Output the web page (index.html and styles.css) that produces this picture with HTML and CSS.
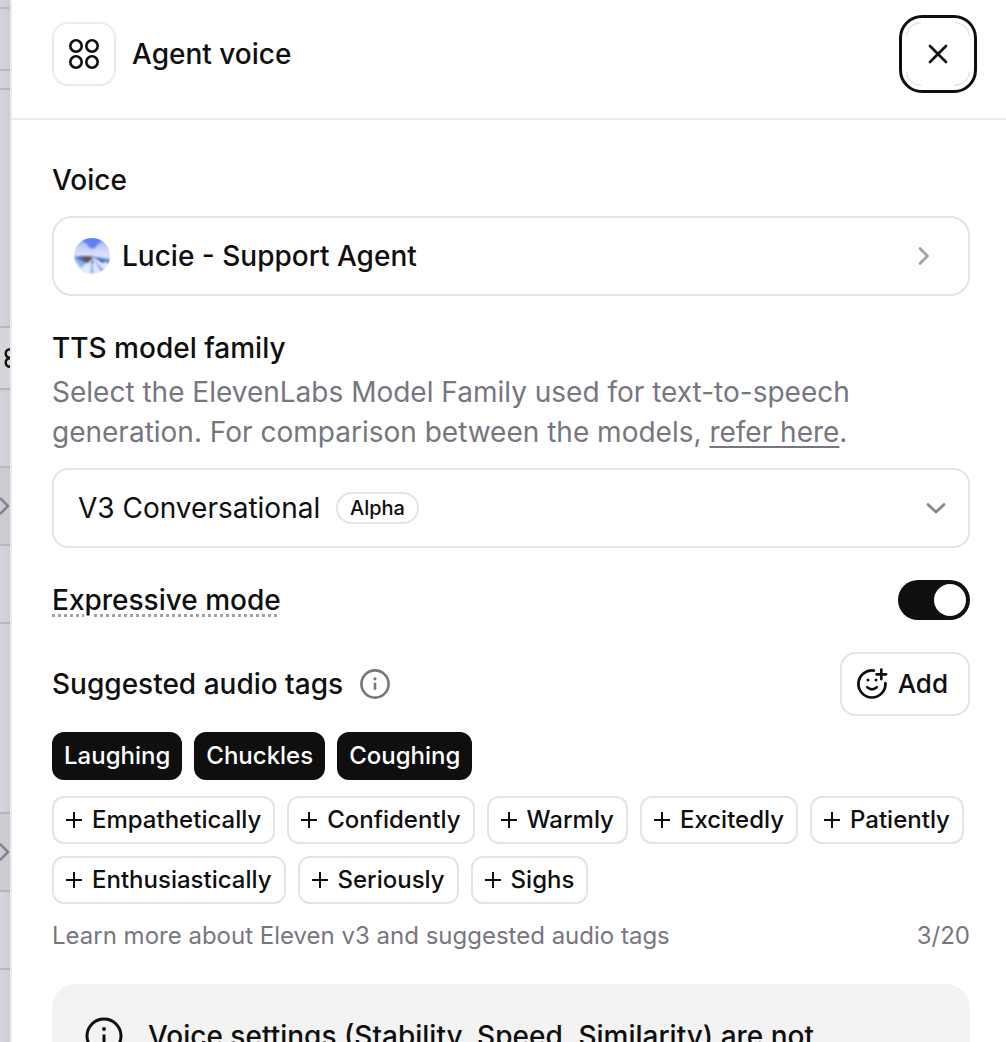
FILE: index.html
```
<!DOCTYPE html>
<html lang="en">
<head>
  <meta charset="UTF-8" />
  <meta name="viewport" content="width=device-width, initial-scale=1.0" />
  <title>Agent voice</title>
  <link rel="stylesheet" href="styles.css">
</head>
<body>

  <!-- page behind the drawer -->
  <div class="backdrop" aria-hidden="true">
    <div class="row row-top"></div>
    <div class="row row-bar"></div>
    <div class="row row-gap"></div>
    <div class="row row-tall"></div>
    <div class="row row-tab">
      <svg width="18" height="26" viewBox="0 0 18 26" fill="none" stroke="#111" stroke-width="2.5">
        <circle cx="6" cy="8.5" r="4.3" /><circle cx="6" cy="17.5" r="4.3" />
      </svg>
    </div>
    <div class="row"></div>
    <div class="row row-link">
      <svg width="10" height="20" viewBox="0 0 10 20" fill="none" stroke="#84838e" stroke-width="2.5">
        <path d="M0 2l8 8-8 8" />
      </svg>
    </div>
    <div class="row"></div>
    <div class="row row-mid"></div>
    <div class="row row-link">
      <svg width="10" height="20" viewBox="0 0 10 20" fill="none" stroke="#84838e" stroke-width="2.5">
        <path d="M0 2l8 8-8 8" />
      </svg>
    </div>
    <div class="row"></div>
  </div>

  <main class="drawer">
    <header class="drawer-header">
      <span class="header-icon">
        <svg width="32" height="32" viewBox="0 0 32 32" fill="none" stroke="#0f0f10" stroke-width="2.6">
          <circle cx="8" cy="8" r="5.7" />
          <circle cx="24" cy="8" r="5.7" />
          <circle cx="8" cy="24" r="5.7" />
          <circle cx="24" cy="24" r="5.7" />
        </svg>
      </span>
      <h1>Agent voice</h1>
      <button class="close" type="button" aria-label="Close">
        <svg width="64" height="64" viewBox="0 0 64 64" fill="none">
          <path d="M.5 14Q2 2 15 .5M49 .5Q62 2 63.5 14M63.5 50Q62 62 49 63.5M15 63.5Q2 62 .5 50" stroke="#c4c4c4" stroke-width=".7" />
          <path d="M24 24l16 16M40 24L24 40" stroke="#0f0f10" stroke-width="2.7" stroke-linecap="round" />
        </svg>
      </button>
    </header>

    <div class="content">
      <section>
        <h2 id="voice-label">Voice</h2>
        <button class="voice" type="button" aria-describedby="voice-label">
          <svg width="36" height="36" viewBox="0 0 36 36">
            <defs>
              <clipPath id="orb"><circle cx="18" cy="18" r="18" /></clipPath>
              <linearGradient id="sky" x1="0" y1="0" x2="0" y2="1">
                <stop offset="0" stop-color="#8ba8f9" />
                <stop offset=".25" stop-color="#c3cffb" />
                <stop offset=".5" stop-color="#dfe2fd" />
                <stop offset="1" stop-color="#e6edff" />
              </linearGradient>
              <linearGradient id="dusk" x1="0" y1="0" x2="1" y2="0">
                <stop offset="0" stop-color="#4a9cf5" />
                <stop offset=".4" stop-color="#5a6a90" />
                <stop offset=".7" stop-color="#5e4f4c" />
                <stop offset="1" stop-color="#4a4a58" />
              </linearGradient>
              <filter id="soft" x="-20%" y="-20%" width="140%" height="140%"><feGaussianBlur stdDeviation="1" /></filter>
            </defs>
            <g clip-path="url(#orb)">
              <rect width="36" height="36" fill="url(#sky)" />
              <g filter="url(#soft)">
                <path d="M7 2Q18-3 30 2Q24 5 22 9Q18 12 15 9Q13 5 7 2z" fill="#5c80f6" />
                <path d="M0 20L17 20 7 30z" fill="#7db4f9" />
                <path d="M-1 19Q8 17.500 19 18.500L15 24 12 25 3 21z" fill="url(#dusk)" />
                <path d="M18 18.500L37 21 36 26z" fill="#5694ef" />
                <path d="M18 18L31 23 29 25z" fill="#394a78" />
                <path d="M19 20L30 32 27 34z" fill="#8aabf5" />
                <path d="M18 18.500L20 35 16 35z" fill="#95b6f8" />
                <path d="M18 18.500l1.500 7h-2z" fill="#4a5f9a" />
              </g>
            </g>
          </svg>
          <span>Lucie - Support Agent</span>
          <svg class="voice-arrow" width="20" height="20" viewBox="0 0 20 20" fill="none" stroke="#a3a2ab" stroke-width="2.7" stroke-linecap="round" stroke-linejoin="round">
            <path d="M6 2.500L13.500 10 6 17.500" />
          </svg>
        </button>
      </section>

      <section>
        <h2><label for="model">TTS model family</label></h2>
        <p class="desc">Select the ElevenLabs Model Family used for text-to-speech generation. For comparison between the models, <a href="#">refer here</a>.</p>
        <div class="select-wrap">
          <select id="model">
            <option>V3 Conversational</option>
          </select>
          <span class="badge">Alpha</span>
          <svg class="select-arrow" width="20" height="20" viewBox="0 0 20 20" fill="none" stroke="#858585" stroke-width="2.7" stroke-linecap="round" stroke-linejoin="round">
            <path d="M2 6.500L10 14l8-7.500" />
          </svg>
        </div>
      </section>

      <section class="split">
        <label class="hint" for="expressive">Expressive mode</label>
        <input class="switch" id="expressive" type="checkbox" role="switch" checked>
      </section>

      <section>
        <div class="split">
          <h2>Suggested audio tags</h2>
          <svg class="info" width="32" height="32" viewBox="0 0 32 32" fill="none" stroke="#77767f" stroke-width="2.6">
            <circle cx="16" cy="16" r="13.6" />
            <path d="M16 14.800v7" />
            <circle cx="16" cy="10.8" r="1.6" fill="#77767f" stroke="none" />
          </svg>
          <button class="add" type="button">
            <svg width="32" height="32" viewBox="0 0 32 32" fill="none" stroke="#0f0f10" stroke-width="2.7" stroke-linecap="round">
              <path d="M18 2.650A13.500 13.500 0 1 0 29.400 15" />
              <path d="M25.300 1.500v9.600M20.500 6.300h9.600" />
              <path d="M11.200 19.300q4.800 4 9.600 0" />
              <circle cx="12" cy="12" r="1.5" fill="#0f0f10" stroke="none" />
              <circle cx="20" cy="12" r="1.5" fill="#0f0f10" stroke="none" />
            </svg>
            Add
          </button>
        </div>

        <div class="chips">
          <button class="chip on" type="button">Laughing</button>
          <button class="chip on" type="button">Chuckles</button>
          <button class="chip on" type="button">Coughing</button>
        </div>
        <div class="chips">
          <button class="chip" type="button"><svg class="plus" viewBox="0 0 20 20"><path d="M10 2v16M2 10h16" /></svg>Empathetically</button>
          <button class="chip" type="button"><svg class="plus" viewBox="0 0 20 20"><path d="M10 2v16M2 10h16" /></svg>Confidently</button>
          <button class="chip" type="button"><svg class="plus" viewBox="0 0 20 20"><path d="M10 2v16M2 10h16" /></svg>Warmly</button>
          <button class="chip" type="button"><svg class="plus" viewBox="0 0 20 20"><path d="M10 2v16M2 10h16" /></svg>Excitedly</button>
          <button class="chip" type="button"><svg class="plus" viewBox="0 0 20 20"><path d="M10 2v16M2 10h16" /></svg>Patiently</button>
          <button class="chip" type="button"><svg class="plus" viewBox="0 0 20 20"><path d="M10 2v16M2 10h16" /></svg>Enthusiastically</button>
          <button class="chip" type="button"><svg class="plus" viewBox="0 0 20 20"><path d="M10 2v16M2 10h16" /></svg>Seriously</button>
          <button class="chip" type="button"><svg class="plus" viewBox="0 0 20 20"><path d="M10 2v16M2 10h16" /></svg>Sighs</button>
        </div>
        <div class="note">
          <a href="#">Learn more about Eleven v3 and suggested audio tags</a>
          <span>3/20</span>
        </div>
      </section>

      <div class="notice">
        <svg width="40" height="40" viewBox="0 0 40 40" fill="none" stroke="#0f0f10" stroke-width="3">
          <circle cx="20" cy="20" r="17" />
          <path d="M20 18.500v9" />
          <circle cx="20" cy="13" r="2" fill="#0f0f10" stroke="none" />
        </svg>
        <p>Voice settings (Stability, Speed, Similarity) are not</p>
      </div>
    </div>
  </main>

</body>
</html>
```
FILE: styles.css
```
* {
  box-sizing: border-box;
}
html, body {
  height: 100%;
  margin: 0;
}
body {
  display: flex;
  overflow: hidden;
  background: #fff;
  color: #0f0f10;
  font-family: Inter, "Liberation Sans", sans-serif;
  font-size: 28px;
  line-height: 40px;
  font-optical-sizing: none;
}
button, select, input {
  margin: 0;
  font: inherit;
  font-optical-sizing: none;
  color: inherit;
}
button {
  cursor: pointer;
}
svg {
  display: block;
  flex: none;
}
h1, h2 {
  margin: 0;
  font-size: 28px;
  font-weight: 500;
}
p {
  margin: 0;
}

/* backdrop */
.backdrop {
  flex: none;
  width: 10px;
  overflow: hidden;
  background: linear-gradient(to right, #d6d5db, #cdccd2);
}
.row {
  display: flex;
  align-items: center;
  height: 78px;
  border-bottom: 2px solid #b7b6bd;
}
.row-top {
  height: 9px;
}
.row-bar {
  height: 62px;
}
.row-gap {
  height: 19px;
}
.row-tall {
  height: 238px;
}
.row-tab {
  height: 62px;
  padding-left: 4px;
  background: #d6d5da;
}
.row-link {
  background: #cccbd0;
}
.row-mid {
  height: 190px;
}

/* drawer */
.drawer {
  flex: 1;
  min-width: 0;
  border-left: 2px solid #ebebeb;
}
.drawer-header {
  display: flex;
  align-items: center;
  gap: 16px;
  padding: 22px 36px 32px 40px;
  border-bottom: 2px solid #ebebeb;
}
.header-icon {
  display: flex;
  align-items: center;
  justify-content: center;
  width: 64px;
  height: 64px;
  border: 2px solid #ebebeb;
  border-radius: 16px;
}
.close {
  width: 64px;
  height: 64px;
  margin-left: auto;
  padding: 0;
  border: 0;
  border-radius: 16px;
  background: #fff;
  outline: 3px solid #0f0f10;
  outline-offset: 4px;
}
.content {
  display: flex;
  flex-direction: column;
  gap: 32px;
  padding: 40px 36px 40px 40px;
}
.split {
  display: flex;
  align-items: center;
}

.voice {
  display: flex;
  align-items: center;
  gap: 12px;
  width: 100%;
  height: 80px;
  margin-top: 16px;
  padding: 0 34px 0 20px;
  border: 2px solid #e4e4e4;
  border-radius: 20px;
  background: #fff;
  font-weight: 500;
}
.voice-arrow {
  margin-left: auto;
}

.desc {
  margin-top: 4px;
  color: #77767f;
}
.desc a {
  color: inherit;
  text-decoration-thickness: 2px;
  text-underline-offset: 4px;
}
.select-wrap {
  position: relative;
  margin-top: 16px;
}
.select-wrap select {
  display: block;
  width: 100%;
  height: 80px;
  padding: 0 60px 0 24px;
  border: 2px solid #e4e4e4;
  border-radius: 16px;
  background: #fff;
  appearance: none;
}
.badge {
  position: absolute;
  top: 24px;
  left: 284px;
  padding: 0 12px;
  border: 2px solid #e4e4e4;
  border-radius: 16px;
  font-size: 20px;
  font-weight: 500;
  line-height: 28px;
}
.select-arrow {
  position: absolute;
  top: 30px;
  right: 24px;
  pointer-events: none;
}

.hint {
  font-weight: 500;
  text-decoration: underline dotted #a3a2ab 3px;
  text-underline-offset: 4px;
}
.switch {
  width: 72px;
  height: 40px;
  margin-left: auto;
  padding: 4px;
  border-radius: 20px;
  background: #0f0f10;
  appearance: none;
}
.switch::before {
  content: "";
  display: block;
  width: 32px;
  height: 32px;
  margin-left: auto;
  border-radius: 50%;
  background: #fff;
}

.info {
  margin-left: 16px;
}
.add {
  display: flex;
  align-items: center;
  gap: 10px;
  height: 64px;
  margin-left: auto;
  padding: 0 20px 0 14px;
  border: 2px solid #e4e4e4;
  border-radius: 16px;
  background: #fff;
  font-size: 26px;
  font-weight: 500;
}
.chips {
  display: flex;
  flex-wrap: wrap;
  gap: 12px;
  margin-top: 16px;
}
.chip {
  display: flex;
  align-items: center;
  gap: 8px;
  height: 48px;
  padding: 0 12px 0 10px;
  border: 2px solid #e4e4e4;
  border-radius: 12px;
  background: #fff;
  font-size: 24px;
  font-weight: 500;
  line-height: 32px;
}
.chip.on {
  padding: 0 10px;
  border-color: #0f0f10;
  background: #0f0f10;
  color: #fff;
}
.plus {
  width: 20px;
  height: 20px;
  fill: none;
  stroke: #0f0f10;
  stroke-width: 2;
}
.note {
  display: flex;
  justify-content: space-between;
  margin-top: 16px;
  color: #77767f;
  font-size: 24px;
  line-height: 32px;
}
.note a {
  color: inherit;
  text-decoration: none;
}

.notice {
  display: flex;
  gap: 24px;
  padding: 32px;
  border-radius: 24px;
  background: #f3f3f3;
  font-weight: 500;
}
```
